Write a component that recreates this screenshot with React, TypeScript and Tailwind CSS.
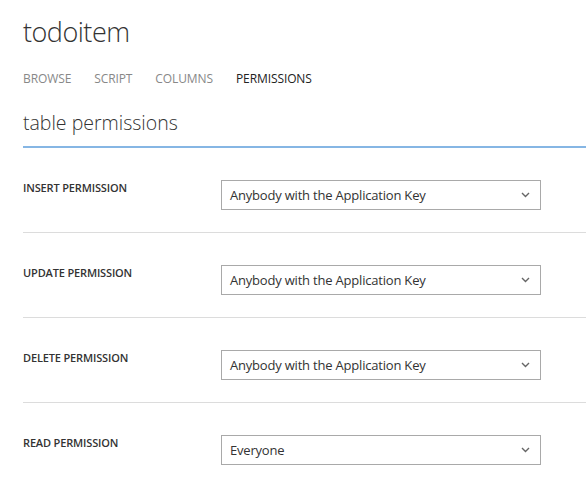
const rows = [
  { label: "INSERT PERMISSION", value: "Anybody with the Application Key" },
  { label: "UPDATE PERMISSION", value: "Anybody with the Application Key" },
  { label: "DELETE PERMISSION", value: "Anybody with the Application Key" },
  { label: "READ PERMISSION", value: "Everyone" },
];

const tabs = ["BROWSE", "SCRIPT", "COLUMNS", "PERMISSIONS"];

function Chevron() {
  return (
    <svg width="9" height="6" viewBox="0 0 9 6" className="shrink-0">
      <polyline points="1,1 4.5,4.5 8,1" fill="none" stroke="#666" strokeWidth="1.4" />
    </svg>
  );
}

export default function App() {
  return (
    <div
      className="min-h-[504px] w-[586px] overflow-hidden bg-white pl-[23px] text-[#333]"
      style={{ fontFamily: '"Open Sans", "Segoe UI", sans-serif' }}
    >
      <h1 className="pt-[14px] text-[27px] font-light leading-[36px] tracking-[-0.5px] text-[#333]">todoitem</h1>
      <nav className="mt-[21px] flex gap-[23px] text-[12px] leading-[16px] tracking-[-0.1px]">
        {tabs.map((t) => (
          <span key={t} className={t === "PERMISSIONS" ? "text-[#222]" : "text-[#888]"}>
            {t}
          </span>
        ))}
      </nav>
      <h2 className="mt-[23px] border-b-2 border-[#86b6e4] pb-[10px] text-[19.5px] font-light leading-[26px] text-[#333]">
        table permissions
      </h2>
      <div>
        {rows.map((r, i) => (
          <div
            key={r.label}
            className={
              i < rows.length - 1
                ? "flex items-start border-b border-[#dcdcdc] pt-[32px] pb-[22px]"
                : "flex items-start pt-[32px] pb-[22px]"
            }
          >
            <div className="w-[198px] pt-[1px] text-[11px] font-semibold leading-[14px] tracking-[-0.15px] text-[#333]">
              {r.label}
            </div>
            <div className="flex h-[30px] w-[320px] items-center justify-between border border-[#a9a9a9] pl-[8px] pr-[10px]">
              <span className="text-[13px] leading-[16px] tracking-[-0.2px] text-[#333]">{r.value}</span>
              <Chevron />
            </div>
          </div>
        ))}
      </div>
    </div>
  );
}
